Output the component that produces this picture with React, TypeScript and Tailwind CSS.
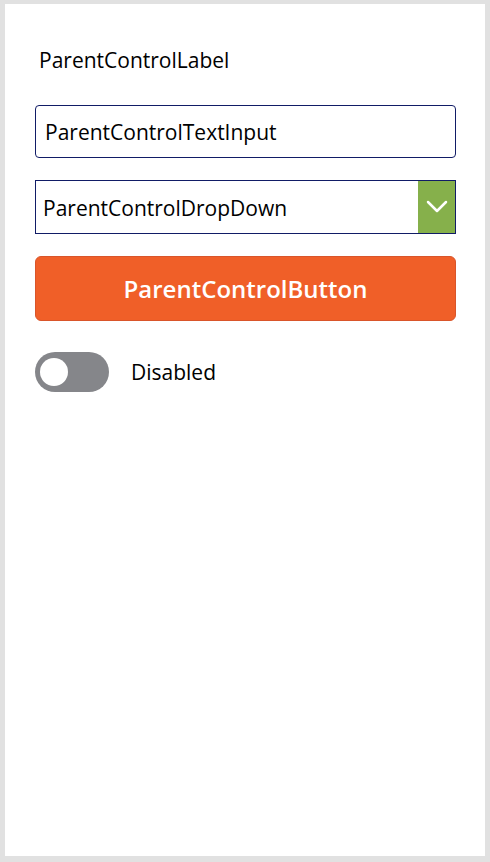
import React from "react";

export default function App() {
  const font = { fontFamily: '"Open Sans", "Noto Sans", sans-serif' };
  return (
    <div
      className="w-[490px] h-[862px] bg-[#e1e1e1] pt-[4px] pl-[5px] pr-[5px] pb-[6px]"
      style={font}
    >
      <div className="w-full h-full bg-white flex flex-col pl-[30px] pr-[29px]">
        <div className="mt-[40px] h-[32px] flex items-center pl-[4px] pt-[2px] text-[21px] text-black">
          ParentControlLabel
        </div>
        <div className="mt-[29px] h-[53px] border border-[#111c66] rounded-[4px] flex items-center pl-[9px] pt-[3px] text-[21px] text-black">
          ParentControlTextInput
        </div>
        <div className="mt-[22px] h-[54px] border border-[#111c66] flex items-stretch text-[21px] text-black">
          <div className="flex-1 flex items-center pl-[7px] pt-[3px]">ParentControlDropDown</div>
          <div className="w-[37px] bg-[#86b04b] flex items-center justify-center">
            <svg width="22" height="14" viewBox="0 0 22 14" fill="none">
              <path d="M2 2 L11 11 L20 2" stroke="white" strokeWidth="2.5" strokeLinecap="round" strokeLinejoin="round" />
            </svg>
          </div>
        </div>
        <button className="mt-[22px] h-[65px] w-full bg-[#f05f28] border border-[#d9552a] rounded-[6px] text-white text-[24px] font-semibold flex items-center justify-center">
          ParentControlButton
        </button>
        <div className="mt-[31px] flex items-center">
          <div className="w-[74px] h-[40px] rounded-full bg-[#85868a] flex items-center pl-[5px]">
            <div className="w-[28px] h-[28px] rounded-full bg-white" />
          </div>
          <div className="ml-[22px] pt-[2px] text-[21px] text-black">Disabled</div>
        </div>
      </div>
    </div>
  );
}
